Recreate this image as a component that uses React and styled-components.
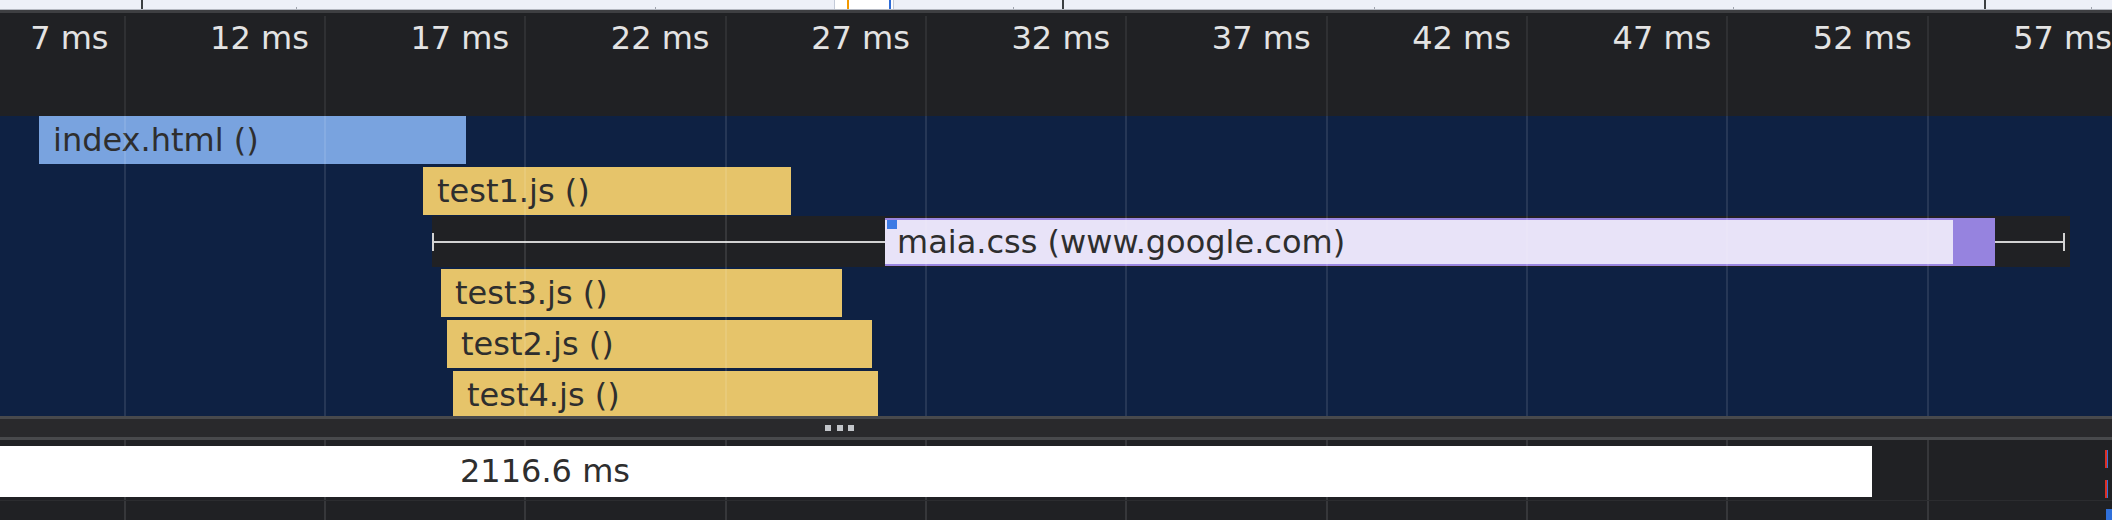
import React from 'react';
import styled, { createGlobalStyle } from 'styled-components';

const GlobalStyle = createGlobalStyle`
  html, body { margin: 0; padding: 0; background: #202124; }
  body { font-family: "DejaVu Sans", "Liberation Sans", sans-serif; }
`;

const GRID_START = 123.5;
const GRID_STEP = 200.35;
const gridXs = Array.from({ length: 10 }, (_, i) => GRID_START + i * GRID_STEP);
const tickLabels = [7, 12, 17, 22, 27, 32, 37, 42, 47, 52, 57];

const overviewLines = [141, 1062, 1984];
const overviewTicks = [296, 655, 1013, 1374, 1733, 2091];

const rows = [
  { name: 'index.html ()', start: 39, end: 466, kind: 'doc' },
  { name: 'test1.js ()', start: 423, end: 791, kind: 'script' },
  {
    name: 'maia.css (www.google.com)',
    kind: 'range',
    boxStart: 432,
    boxEnd: 2070,
    start: 885,
    end: 1995,
    tail: 42,
    capEnd: 2065,
  },
  { name: 'test3.js ()', start: 441, end: 842, kind: 'script' },
  { name: 'test2.js ()', start: 447, end: 872, kind: 'script' },
  { name: 'test4.js ()', start: 453, end: 878, kind: 'script' },
];

const Frame = styled.div`
  width: 2112px;
  height: 520px;
  overflow: hidden;
  display: flex;
  flex-direction: column;
  background: #202124;
  font-family: "DejaVu Sans", "Liberation Sans", sans-serif;
  font-size: 32px;
`;

/* ---------- overview strip ---------- */
const Overview = styled.div`
  position: relative;
  flex: none;
  height: 9px;
  background: #edf0f8;
  border-bottom: 1px solid #b4b8c1;
`;

const OverviewRule = styled.div`
  flex: none;
  height: 3px;
  background: #3e3f42;
`;

const OverviewMark = styled.div`
  position: absolute;
  top: 0;
  bottom: 0;
  width: 2px;
  background: ${(p) => p.$color};
`;

const OverviewTick = styled.div`
  position: absolute;
  bottom: 0;
  width: 1px;
  height: 2px;
  background: #9ea3ad;
`;

const Selection = styled.div`
  position: absolute;
  top: 0;
  bottom: 0;
  left: 834px;
  width: 60px;
  background: #ffffff;
  border-left: 1px solid #c3cad8;
  border-right: 1px solid #c3cad8;
  box-sizing: border-box;
`;

/* ---------- grid lines ---------- */
const GridLayer = styled.div`
  position: absolute;
  left: 0;
  right: 0;
  top: ${(p) => p.$top || 0}px;
  bottom: 0;
  pointer-events: none;
  z-index: ${(p) => (p.$over ? 3 : 0)};
`;

const GridLine = styled.div`
  position: absolute;
  top: 0;
  bottom: 0;
  width: 2px;
  background: ${(p) => p.$color};
`;

const Grid = ({ color, over, top }) => (
  <GridLayer $over={over} $top={top}>
    {gridXs.map((x) => (
      <GridLine key={x} $color={color} style={{ left: x }} />
    ))}
  </GridLayer>
);

/* ---------- header ---------- */
const Header = styled.div`
  position: relative;
  flex: none;
  height: 103px;
  background: #202124;
`;

const LabelRow = styled.div`
  position: relative;
  z-index: 1;
  display: flex;
  margin-left: -76.85px;
  padding-top: 6px;
`;

const TickLabel = styled.div`
  flex: 0 0 ${GRID_STEP}px;
  box-sizing: border-box;
  padding-right: 15px;
  text-align: right;
  white-space: nowrap;
  color: #e3e3e3;
  font-size: 32px;
  line-height: normal;
`;

/* ---------- waterfall ---------- */
const Waterfall = styled.div`
  position: relative;
  flex: none;
  height: 300px;
  overflow: hidden;
  background: #0e2143;
  display: flex;
  flex-direction: column;
  gap: 3px;
`;

const Row = styled.div`
  flex: none;
  display: flex;
  height: 48px;
`;

const barColors = {
  doc: '#79a3df',
  script: '#e6c46a',
};

const Bar = styled.div`
  flex: none;
  box-sizing: border-box;
  height: 48px;
  padding-left: 14px;
  background: ${(p) => barColors[p.$kind]};
  color: #2e2e2e;
  font-size: 32px;
  line-height: 48px;
  white-space: nowrap;
  overflow: hidden;
`;

const RangeBox = styled.div`
  flex: none;
  display: flex;
  align-items: center;
  height: 51px;
  margin-top: -2px;
  background: #202124;
`;

const Whisker = styled.div`
  flex: none;
  box-sizing: border-box;
  height: 18px;
  ${(p) => (p.$cap === 'left' ? 'border-left' : 'border-right')}: 2px solid #d2d2d2;
  background: linear-gradient(#d2d2d2, #d2d2d2) center / 100% 2px no-repeat;
`;

const RequestBar = styled.div`
  flex: none;
  display: flex;
  height: 48px;
`;

const RequestBody = styled.div`
  position: relative;
  flex: 1;
  box-sizing: border-box;
  border-top: 2px solid #9a86e0;
  border-bottom: 2px solid #9a86e0;
  background: #e8e3f8;
  padding-left: 12px;
  color: #2e2e2e;
  font-size: 32px;
  line-height: 44px;
  white-space: nowrap;
  overflow: hidden;
`;

const RequestTail = styled.div`
  flex: none;
  background: #9683df;
`;

const StartMarker = styled.div`
  position: absolute;
  left: 2px;
  top: -1px;
  width: 10px;
  height: 10px;
  background: #3d7be5;
`;

/* ---------- divider ---------- */
const Divider = styled.div`
  flex: none;
  display: flex;
  align-items: center;
  height: 24px;
  box-sizing: border-box;
  background: #29292c;
  border-top: 3px solid #48494c;
  border-bottom: 3px solid #48494c;
`;

const Dots = styled.div`
  display: flex;
  gap: 5.5px;
  margin-left: 825px;
`;

const Dot = styled.span`
  width: 6px;
  height: 6px;
  background: #c2c5ca;
`;

/* ---------- summary ---------- */
const Summary = styled.div`
  position: relative;
  flex: 1;
  background: #202124;
  border-bottom: 0;
`;

const SummaryBar = styled.div`
  position: relative;
  z-index: 1;
  margin-top: 6px;
  width: 1872px;
  height: 51px;
  box-sizing: border-box;
  padding-left: 460px;
  background: #ffffff;
  color: #2e2e2e;
  font-size: 32px;
  line-height: 51px;
  white-space: nowrap;
`;

const SummaryRule = styled.div`
  position: relative;
  z-index: 1;
  margin-top: 3px;
  height: 1px;
  background: #2b2c2f;
`;

const EdgeMark = styled.div`
  position: absolute;
  z-index: 1;
  left: 2105px;
  width: 3px;
  background: linear-gradient(90deg, #d93025 0 2px, #3b6fd8 2px 3px);
`;

const EdgeBlock = styled.div`
  position: absolute;
  z-index: 1;
  left: 2106px;
  right: 0;
  bottom: 0;
  height: 11px;
  background: #2f6fd9;
`;

export default function App() {
  return (
    <>
      <GlobalStyle />
      <Frame>
        <Overview>
          {overviewTicks.map((x) => (
            <OverviewTick key={x} style={{ left: x }} />
          ))}
          {overviewLines.map((x) => (
            <OverviewMark key={x} $color="#3c4043" style={{ left: x }} />
          ))}
          <Selection />
          <OverviewMark $color="#f29900" style={{ left: 847 }} />
          <OverviewMark $color="#2e6bd6" style={{ left: 889 }} />
        </Overview>
        <OverviewRule />

        <Header>
          <Grid color="rgba(255,255,255,0.07)" top={3} />
          <LabelRow>
            {tickLabels.map((t) => (
              <TickLabel key={t}>{t} ms</TickLabel>
            ))}
          </LabelRow>
        </Header>

        <Waterfall>
          {rows.map((r) =>
            r.kind === 'range' ? (
              <Row key={r.name}>
                <RangeBox style={{ marginLeft: r.boxStart, width: r.boxEnd - r.boxStart }}>
                  <Whisker $cap="left" style={{ width: r.start - r.boxStart }} />
                  <RequestBar style={{ width: r.end - r.start }}>
                    <RequestBody>
                      <StartMarker />
                      {r.name}
                    </RequestBody>
                    <RequestTail style={{ width: r.tail }} />
                  </RequestBar>
                  <Whisker $cap="right" style={{ width: r.capEnd - r.end }} />
                </RangeBox>
              </Row>
            ) : (
              <Row key={r.name}>
                <Bar $kind={r.kind} style={{ marginLeft: r.start, width: r.end - r.start }}>
                  {r.name}
                </Bar>
              </Row>
            )
          )}
          <Grid color="rgba(255,255,255,0.1)" over />
        </Waterfall>

        <Divider>
          <Dots>
            <Dot />
            <Dot />
            <Dot />
          </Dots>
        </Divider>

        <Summary>
          <Grid color="rgba(255,255,255,0.1)" />
          <SummaryBar>2116.6 ms</SummaryBar>
          <SummaryRule />
          <EdgeMark style={{ top: 10, height: 18 }} />
          <EdgeMark style={{ top: 40, height: 18 }} />
          <EdgeBlock />
        </Summary>
      </Frame>
    </>
  );
}
